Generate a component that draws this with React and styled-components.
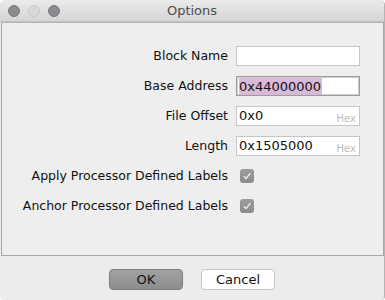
import { Fragment } from 'react';
import styled, { createGlobalStyle } from 'styled-components';

const GlobalStyle = createGlobalStyle`
  html, body {
    margin: 0;
    padding: 0;
    background: #ffffff;
  }
  * {
    box-sizing: border-box;
  }
`;

const Window = styled.div`
  width: 385px;
  height: 300px;
  display: flex;
  flex-direction: column;
  background: #ececec;
  border-radius: 5px 5px 4px 4px;
  border-right: 1px solid #b4b4b4;
  overflow: hidden;
  font-family: "DejaVu Sans", "Liberation Sans", sans-serif;
`;

const TitleBar = styled.div`
  height: 22px;
  flex: none;
  display: flex;
  align-items: center;
  position: relative;
  background: linear-gradient(#ebebeb, #d5d5d5);
  border-bottom: 1px solid #c2c2c2;
`;

const Lights = styled.div`
  display: flex;
  gap: 8px;
  padding-left: 8px;
`;

const Light = styled.span`
  width: 12px;
  height: 12px;
  border-radius: 50%;
  background: ${(p) => (p.$off ? '#d9d9d9' : '#8b8b8f')};
  border: 1px solid ${(p) => (p.$off ? '#c8c8c8' : '#7a7a7e')};
`;

const Title = styled.div`
  position: absolute;
  left: 0;
  right: 0;
  text-align: center;
  font-size: 13px;
  color: #4b4b4b;
  pointer-events: none;
`;

const Panel = styled.div`
  margin: 0 0 0 1px;
  height: 234px;
  border: 1px solid #a7a7a7;
  border-top-color: #b5b5b5;
  background: #eeeeee;
  padding: 23px 23px 0 0;
`;

const Form = styled.div`
  display: grid;
  grid-template-columns: 1fr 124px;
  grid-auto-rows: 30px;
  column-gap: 8px;
`;

const Label = styled.div`
  font-size: 12.5px;
  color: #111111;
  text-align: right;
  align-self: start;
  line-height: 20px;
  white-space: nowrap;
`;

const Field = styled.div`
  position: relative;
  height: 20px;
  background: #ffffff;
  border: 1px solid ${(p) => (p.$focus ? '#9c9c9c' : '#c6c6c6')};
  box-shadow: ${(p) => (p.$focus ? 'inset 0 0 0 1px #cfcfcf' : 'none')};
  font-size: 13px;
  color: #111111;
  line-height: 18px;
  padding-left: 2px;
  display: flex;
  align-items: center;
`;

const Selected = styled.span`
  background: #d9b9d9;
  line-height: 17px;
  padding-right: 1px;
`;

const Hint = styled.span`
  position: absolute;
  right: 3px;
  bottom: 0px;
  font-size: 10px;
  line-height: 12px;
  color: #bdbdbd;
`;

const CheckCell = styled.div`
  padding: 3px 0 0 4px;
`;

const Check = styled.div`
  width: 14px;
  height: 14px;
  border-radius: 3px;
  background: linear-gradient(#9c9c9c, #8b8b8b);
  display: flex;
  align-items: center;
  justify-content: center;
`;

const Footer = styled.div`
  flex: 1;
  display: flex;
  justify-content: center;
  align-items: flex-start;
  gap: 18px;
  padding: 13px 0 0 0;
`;

const Button = styled.button`
  width: 74px;
  height: 21px;
  border-radius: 4px;
  font-family: inherit;
  font-size: 13px;
  color: #111111;
  padding: 0;
  border: 1px solid ${(p) => (p.$primary ? '#7f7f7f' : '#c4c4c4')};
  background: ${(p) =>
    p.$primary ? 'linear-gradient(#a2a2a2, #8c8c8c)' : '#ffffff'};
`;

const rows = [
  { label: 'Block Name', value: '' },
  { label: 'Base Address', value: '0x44000000', focus: true },
  { label: 'File Offset', value: '0x0', hex: true },
  { label: 'Length', value: '0x1505000', hex: true },
];

const checks = ['Apply Processor Defined Labels', 'Anchor Processor Defined Labels'];

function CheckMark() {
  return (
    <svg width="10" height="10" viewBox="0 0 10 10">
      <path d="M1.8 5.2 L4 7.6 L8.4 2.2" fill="none" stroke="#f4f4f4" strokeWidth="1.3" />
    </svg>
  );
}

export default function App() {
  return (
    <>
      <GlobalStyle />
      <Window>
        <TitleBar>
          <Lights>
            <Light />
            <Light $off />
            <Light />
          </Lights>
          <Title>Options</Title>
        </TitleBar>
        <Panel>
          <Form>
            {rows.map((r) => (
              <Fragment key={r.label}>
                <Label>{r.label}</Label>
                <Field $focus={r.focus}>
                  {r.focus ? <Selected>{r.value}</Selected> : r.value}
                  {r.hex && <Hint>Hex</Hint>}
                </Field>
              </Fragment>
            ))}
            {checks.map((c) => (
              <Fragment key={c}>
                <Label>{c}</Label>
                <CheckCell>
                  <Check>
                    <CheckMark />
                  </Check>
                </CheckCell>
              </Fragment>
            ))}
          </Form>
        </Panel>
        <Footer>
          <Button $primary>OK</Button>
          <Button>Cancel</Button>
        </Footer>
      </Window>
    </>
  );
}
